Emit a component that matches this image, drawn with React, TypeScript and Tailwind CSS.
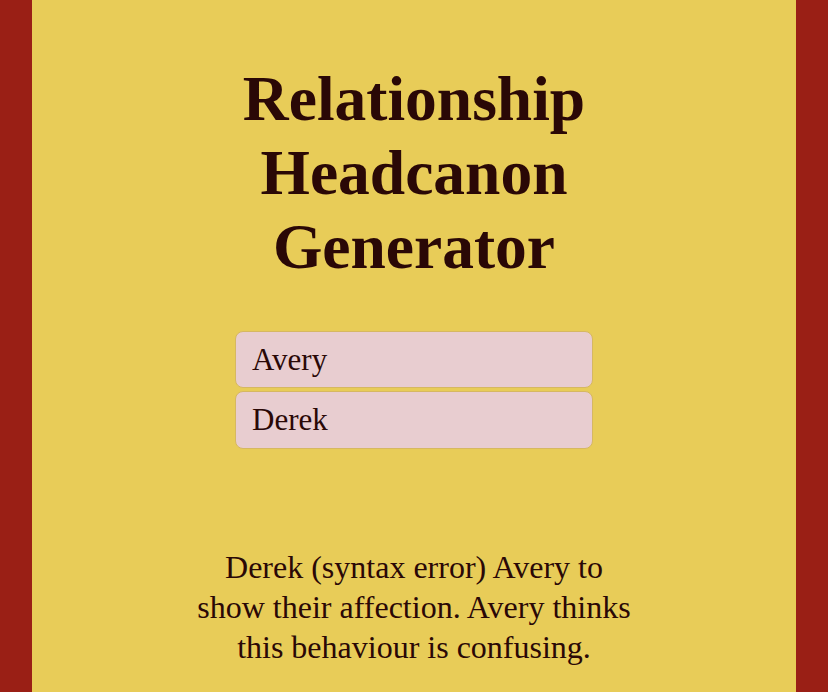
export default function App() {
  return (
    <div className="min-h-[692px] bg-[#9a1f15] px-[32px]" style={{ fontFamily: '"Liberation Serif", "Times New Roman", serif' }}>
      <div className="flex min-h-[692px] flex-col items-center bg-[#e8cc58] pt-[62px] text-[#2a0806]">
        <h1 className="w-[440px] text-center text-[63.5px] font-bold leading-[74px]">
          Relationship Headcanon Generator
        </h1>
        <div className="mt-[47px] flex w-[358px] flex-col gap-[3px]">
          <input
            defaultValue="Avery"
            className="h-[57px] rounded-[8px] border border-[#d6b861] bg-[#e8cdd0] px-[16px] text-[31px] text-[#2a0806] outline-none"
          />
          <input
            defaultValue="Derek"
            className="h-[58px] rounded-[8px] border border-[#d6b861] bg-[#e8cdd0] px-[16px] text-[31px] text-[#2a0806] outline-none"
          />
        </div>
        <p className="mt-[98px] w-[444px] text-center text-[32px] leading-[40px]">
          Derek (syntax error) Avery to show their affection. Avery thinks this behaviour is confusing.
        </p>
      </div>
    </div>
  );
}
